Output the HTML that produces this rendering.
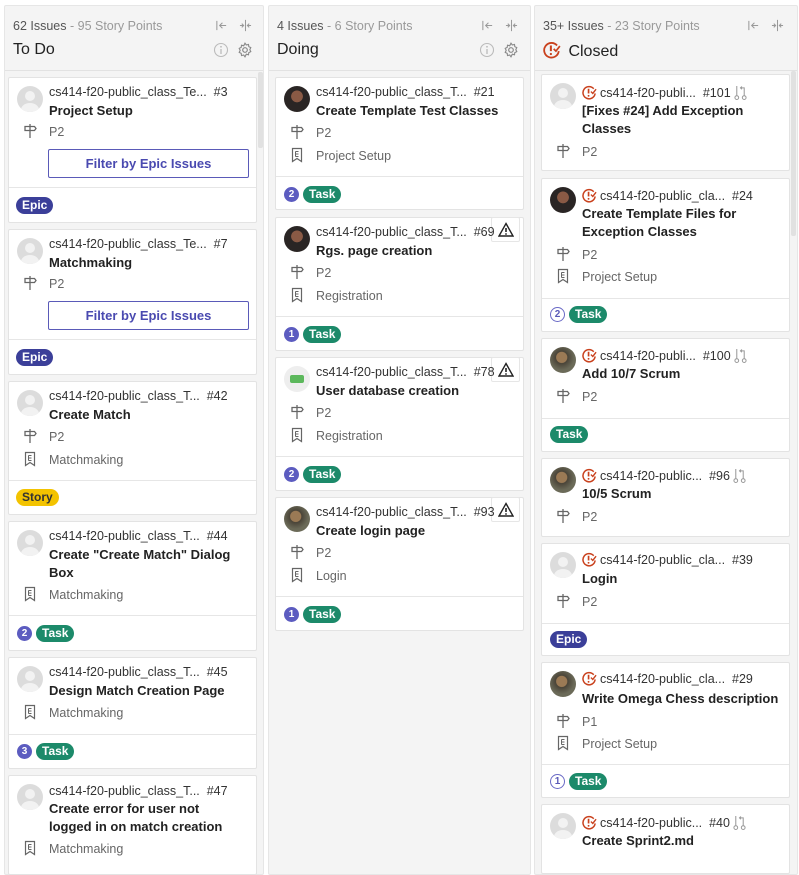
<!DOCTYPE html>
<html><head><meta charset="utf-8">
<style>
*{box-sizing:border-box;margin:0;padding:0}
body{width:799px;height:861px;overflow:hidden;background:#fff;font-family:"Liberation Sans",sans-serif;color:#333;position:relative}
.col{position:absolute;top:5px;height:870px;background:#f4f4f4;border:1px solid #e6e6e6;border-radius:2px}
.hd{position:absolute;left:0;right:0;top:0;height:65px;border-bottom:1px solid #e2e2e2}
.cnt{position:absolute;left:8px;top:13px;font-size:12.5px;color:#555;white-space:nowrap}
.cnt span{color:#999}
.nm{position:absolute;left:8px;top:35px;font-size:16px;color:#222}
.hi{position:absolute}
.sb{position:absolute;width:5px;background:#e1e1e1;border-radius:2px}
.c{position:absolute;background:#fff;border:1px solid #e3e3e3;border-radius:2px}
.c>*{position:absolute}
.av{left:8px;width:26px;height:26px;border-radius:50%;background:#dcdcdc;overflow:hidden}
.av:before{content:"";position:absolute;left:8px;top:5px;width:10px;height:10px;border-radius:50%;background:#f2f2f2}
.av:after{content:"";position:absolute;left:4px;top:17px;width:18px;height:14px;border-radius:50%;background:#f2f2f2}
.av.p{background:radial-gradient(circle at 50% 40%,#8a5a45 0 28%,#2a2524 30%)}
.av.p2{background:radial-gradient(circle at 45% 40%,#9b7a55 0 25%,#4a4438 28%,#6b6a58 60%)}
.av.g{background:#eee}
.av.p:before,.av.p:after,.av.p2:before,.av.p2:after{display:none}
.av.g:before{left:6px;top:9px;width:14px;height:8px;border-radius:2px;background:#5cb85c}
.av.g:after{display:none}
.l1{left:40px;font-size:12.5px;line-height:17px;color:#333;white-space:nowrap}
.t{left:40px;font-size:13px;line-height:18px;color:#222;font-weight:bold;white-space:nowrap}
.m{left:40px;font-size:12.5px;line-height:18px;color:#666;white-space:nowrap}
.mi{left:14px;width:14px;height:16px}
.btn{left:39px;width:201px;height:29px;border:1px solid #5a5ab8;border-radius:2px;color:#4a4ab0;font-size:13px;text-align:center;line-height:27px;font-weight:bold}
.ft{left:0;right:0;height:1px;background:#e6e6e6}
.lb{height:17px;border-radius:9px;color:#fff;font-size:12px;font-weight:bold;line-height:17px;padding:0 6px}
.epic{background:#3b3f99}.task{background:#1c8a6a}.story{background:#f3c300;color:#333}
.w{width:15px;height:15px;border-radius:50%;background:#5c5cc0;color:#fff;font-size:10px;font-weight:bold;text-align:center;line-height:15px}
.w.o{background:#fff;border:1px solid #6a6ac6;color:#5a5ab8;line-height:13px}
.warn{right:3px;top:-1px;width:29px;height:25px;background:#fff;border:1px solid #e6e6e6;border-radius:2px}
.ci{display:inline-block;vertical-align:-3px;margin-right:3px}
</style></head><body>

<svg width="0" height="0" style="position:absolute"><defs>
<symbol id="ms" viewBox="0 0 14 16"><path d="M7 1v14M2 3.5h9.5l1.5 2-1.5 2H2z" fill="none" stroke="#666" stroke-width="1.3"/></symbol>
<symbol id="ep" viewBox="0 0 14 16"><path d="M2.5 1.5h9v13l-4.5-3-4.5 3z" fill="none" stroke="#666" stroke-width="1.2"/><path d="M5.5 4.5h3M5.5 7h3M5.5 9.5h3M5.5 4.5v5" stroke="#666" stroke-width="1"/></symbol>
<symbol id="cl" viewBox="0 0 16 16"><path d="M12.5 4A6.5 6.5 0 1 0 14 9" fill="none" stroke="#c9411d" stroke-width="1.6"/><path d="M7 4v5" stroke="#c9411d" stroke-width="1.8"/><circle cx="7" cy="11.5" r="1" fill="#c9411d"/><path d="M9.5 7l2 2 3.5-4.5" fill="none" stroke="#c9411d" stroke-width="1.5"/></symbol>
<symbol id="pr" viewBox="0 0 14 18"><circle cx="3" cy="14.5" r="2" fill="none" stroke="#999" stroke-width="1.1"/><circle cx="11" cy="14.5" r="2" fill="none" stroke="#999" stroke-width="1.1"/><path d="M3 12.5V2M11 12.5V4H7M8.5 2.5L7 4l1.5 1.5" fill="none" stroke="#999" stroke-width="1.1"/></symbol>
<symbol id="wr" viewBox="0 0 16 16"><path d="M8 1.5L15 14H1z" fill="none" stroke="#222" stroke-width="1.4"/><path d="M8 6v4" stroke="#222" stroke-width="1.6"/><circle cx="8" cy="12" r=".9" fill="#222"/></symbol>
<symbol id="hc" viewBox="0 0 14 14"><path d="M2 2v10M12 7H5M8 4L5 7l3 3" fill="none" stroke="#999" stroke-width="1.1"/></symbol>
<symbol id="hc2" viewBox="0 0 14 14"><path d="M7 1v12M1 7h4M3 5l2 2-2 2M13 7H9M11 5L9 7l2 2" fill="none" stroke="#999" stroke-width="1.1"/></symbol>
<symbol id="inf" viewBox="0 0 16 16"><circle cx="8" cy="8" r="6.5" fill="none" stroke="#bbb" stroke-width="1.1"/><path d="M8 7v5" stroke="#bbb" stroke-width="1.3"/><circle cx="8" cy="4.8" r=".9" fill="#bbb"/></symbol>
<symbol id="gr" viewBox="0 0 16 16"><circle cx="8" cy="8" r="2.3" fill="none" stroke="#888" stroke-width="1.2"/><path d="M8 1.2l1.3 1.8 2.2-.6.3 2.2 2 1-1 2 1 2-2 1-.3 2.2-2.2-.6L8 14.8l-1.3-1.8-2.2.6-.3-2.2-2-1 1-2-1-2 2-1 .3-2.2 2.2.6z" fill="none" stroke="#888" stroke-width="1.1"/></symbol>
</defs></svg>

<!-- Column 1 -->
<div class="col" style="left:4px;width:260px">
 <div class="hd">
  <div class="cnt">62 Issues <span>- 95 Story Points</span></div>
  <div class="nm">To Do</div>
  <svg class="hi" style="left:210px;top:13px" width="13" height="13"><use href="#hc"/></svg>
  <svg class="hi" style="left:234px;top:13px" width="13" height="13"><use href="#hc2"/></svg>
  <svg class="hi" style="left:208px;top:36px" width="16" height="16"><use href="#inf"/></svg>
  <svg class="hi" style="left:232px;top:36px" width="16" height="16"><use href="#gr"/></svg>
 </div>
 <div class="sb" style="left:253px;top:66px;height:76px"></div>
</div>

<div class="c" style="left:8px;top:77px;width:249px;height:146px">
 <div class="av" style="top:8px"></div>
 <div class="l1" style="top:6px">cs414-f20-public_class_Te...&nbsp; #3</div>
 <div class="t" style="top:24px">Project Setup</div>
 <svg class="mi" style="top:45px"><use href="#ms"/></svg><div class="m" style="top:45px">P2</div>
 <div class="btn" style="top:71px">Filter by Epic Issues</div>
 <div class="ft" style="top:109px"></div>
 <div class="lb epic" style="left:7px;top:119px">Epic</div>
</div>
<div class="c" style="left:8px;top:229px;width:249px;height:146px">
 <div class="av" style="top:8px"></div>
 <div class="l1" style="top:6px">cs414-f20-public_class_Te...&nbsp; #7</div>
 <div class="t" style="top:24px">Matchmaking</div>
 <svg class="mi" style="top:45px"><use href="#ms"/></svg><div class="m" style="top:45px">P2</div>
 <div class="btn" style="top:71px">Filter by Epic Issues</div>
 <div class="ft" style="top:109px"></div>
 <div class="lb epic" style="left:7px;top:119px">Epic</div>
</div>
<div class="c" style="left:8px;top:381px;width:249px;height:134px">
 <div class="av" style="top:8px"></div>
 <div class="l1" style="top:6px">cs414-f20-public_class_T...&nbsp; #42</div>
 <div class="t" style="top:24px">Create Match</div>
 <svg class="mi" style="top:46px"><use href="#ms"/></svg><div class="m" style="top:46px">P2</div>
 <svg class="mi" style="top:69px"><use href="#ep"/></svg><div class="m" style="top:69px">Matchmaking</div>
 <div class="ft" style="top:98px"></div>
 <div class="lb story" style="left:7px;top:107px">Story</div>
</div>
<div class="c" style="left:8px;top:521px;width:249px;height:130px">
 <div class="av" style="top:8px"></div>
 <div class="l1" style="top:6px">cs414-f20-public_class_T...&nbsp; #44</div>
 <div class="t" style="top:24px">Create "Create Match" Dialog</div>
 <div class="t" style="top:42px">Box</div>
 <svg class="mi" style="top:64px"><use href="#ep"/></svg><div class="m" style="top:64px">Matchmaking</div>
 <div class="ft" style="top:93px"></div>
 <div class="w" style="left:8px;top:104px">2</div>
 <div class="lb task" style="left:27px;top:103px">Task</div>
</div>
<div class="c" style="left:8px;top:657px;width:249px;height:112px">
 <div class="av" style="top:8px"></div>
 <div class="l1" style="top:6px">cs414-f20-public_class_T...&nbsp; #45</div>
 <div class="t" style="top:24px">Design Match Creation Page</div>
 <svg class="mi" style="top:46px"><use href="#ep"/></svg><div class="m" style="top:46px">Matchmaking</div>
 <div class="ft" style="top:76px"></div>
 <div class="w" style="left:8px;top:86px">3</div>
 <div class="lb task" style="left:27px;top:85px">Task</div>
</div>
<div class="c" style="left:8px;top:775px;width:249px;height:100px">
 <div class="av" style="top:8px"></div>
 <div class="l1" style="top:7px">cs414-f20-public_class_T...&nbsp; #47</div>
 <div class="t" style="top:24px">Create error for user not</div>
 <div class="t" style="top:42px">logged in on match creation</div>
 <svg class="mi" style="top:64px"><use href="#ep"/></svg><div class="m" style="top:64px">Matchmaking</div>
</div>

<!-- Column 2 -->
<div class="col" style="left:268px;width:263px">
 <div class="hd">
  <div class="cnt">4 Issues <span>- 6 Story Points</span></div>
  <div class="nm">Doing</div>
  <svg class="hi" style="left:212px;top:13px" width="13" height="13"><use href="#hc"/></svg>
  <svg class="hi" style="left:236px;top:13px" width="13" height="13"><use href="#hc2"/></svg>
  <svg class="hi" style="left:210px;top:36px" width="16" height="16"><use href="#inf"/></svg>
  <svg class="hi" style="left:234px;top:36px" width="16" height="16"><use href="#gr"/></svg>
 </div>
</div>

<div class="c" style="left:275px;top:77px;width:249px;height:133px">
 <div class="av p" style="top:8px"></div>
 <div class="l1" style="top:6px">cs414-f20-public_class_T...&nbsp; #21</div>
 <div class="t" style="top:24px">Create Template Test Classes</div>
 <svg class="mi" style="top:46px"><use href="#ms"/></svg><div class="m" style="top:46px">P2</div>
 <svg class="mi" style="top:69px"><use href="#ep"/></svg><div class="m" style="top:69px">Project Setup</div>
 <div class="ft" style="top:98px"></div>
 <div class="w" style="left:8px;top:109px">2</div>
 <div class="lb task" style="left:27px;top:108px">Task</div>
</div>
<div class="c" style="left:275px;top:217px;width:249px;height:134px">
 <div class="warn"><svg style="position:absolute;left:6px;top:4px" width="16" height="16"><use href="#wr"/></svg></div>
 <div class="av p" style="top:8px"></div>
 <div class="l1" style="top:6px">cs414-f20-public_class_T...&nbsp; #69</div>
 <div class="t" style="top:24px">Rgs. page creation</div>
 <svg class="mi" style="top:46px"><use href="#ms"/></svg><div class="m" style="top:46px">P2</div>
 <svg class="mi" style="top:69px"><use href="#ep"/></svg><div class="m" style="top:69px">Registration</div>
 <div class="ft" style="top:98px"></div>
 <div class="w" style="left:8px;top:109px">1</div>
 <div class="lb task" style="left:27px;top:108px">Task</div>
</div>
<div class="c" style="left:275px;top:357px;width:249px;height:134px">
 <div class="warn"><svg style="position:absolute;left:6px;top:4px" width="16" height="16"><use href="#wr"/></svg></div>
 <div class="av g" style="top:8px"></div>
 <div class="l1" style="top:6px">cs414-f20-public_class_T...&nbsp; #78</div>
 <div class="t" style="top:24px">User database creation</div>
 <svg class="mi" style="top:46px"><use href="#ms"/></svg><div class="m" style="top:46px">P2</div>
 <svg class="mi" style="top:69px"><use href="#ep"/></svg><div class="m" style="top:69px">Registration</div>
 <div class="ft" style="top:98px"></div>
 <div class="w" style="left:8px;top:109px">2</div>
 <div class="lb task" style="left:27px;top:108px">Task</div>
</div>
<div class="c" style="left:275px;top:497px;width:249px;height:134px">
 <div class="warn"><svg style="position:absolute;left:6px;top:4px" width="16" height="16"><use href="#wr"/></svg></div>
 <div class="av p2" style="top:8px"></div>
 <div class="l1" style="top:6px">cs414-f20-public_class_T...&nbsp; #93</div>
 <div class="t" style="top:24px">Create login page</div>
 <svg class="mi" style="top:46px"><use href="#ms"/></svg><div class="m" style="top:46px">P2</div>
 <svg class="mi" style="top:69px"><use href="#ep"/></svg><div class="m" style="top:69px">Login</div>
 <div class="ft" style="top:98px"></div>
 <div class="w" style="left:8px;top:109px">1</div>
 <div class="lb task" style="left:27px;top:108px">Task</div>
</div>

<!-- Column 3 -->
<div class="col" style="left:534px;width:264px">
 <div class="hd">
  <div class="cnt">35+ Issues <span>- 23 Story Points</span></div>
  <div class="nm"><svg class="ci" width="18" height="18"><use href="#cl"/></svg> Closed</div>
  <svg class="hi" style="left:212px;top:13px" width="13" height="13"><use href="#hc"/></svg>
  <svg class="hi" style="left:236px;top:13px" width="13" height="13"><use href="#hc2"/></svg>
 </div>
 <div class="sb" style="left:256px;top:65px;height:165px"></div>
</div>

<div class="c" style="left:541px;top:74px;width:249px;height:97px">
 <div class="av" style="top:8px"></div>
 <div class="l1" style="top:9px"><svg class="ci" width="15" height="15"><use href="#cl"/></svg>cs414-f20-publi...&nbsp; #101 <svg class="ci" width="13" height="17" style="vertical-align:-4px"><use href="#pr"/></svg></div>
 <div class="t" style="top:27px">[Fixes #24] Add Exception</div>
 <div class="t" style="top:45px">Classes</div>
 <svg class="mi" style="top:68px"><use href="#ms"/></svg><div class="m" style="top:68px">P2</div>
</div>
<div class="c" style="left:541px;top:178px;width:249px;height:154px">
 <div class="av p" style="top:8px"></div>
 <div class="l1" style="top:9px"><svg class="ci" width="15" height="15"><use href="#cl"/></svg>cs414-f20-public_cla...&nbsp; #24</div>
 <div class="t" style="top:26px">Create Template Files for</div>
 <div class="t" style="top:44px">Exception Classes</div>
 <svg class="mi" style="top:67px"><use href="#ms"/></svg><div class="m" style="top:67px">P2</div>
 <svg class="mi" style="top:89px"><use href="#ep"/></svg><div class="m" style="top:89px">Project Setup</div>
 <div class="ft" style="top:119px"></div>
 <div class="w o" style="left:8px;top:128px">2</div>
 <div class="lb task" style="left:27px;top:127px">Task</div>
</div>
<div class="c" style="left:541px;top:338px;width:249px;height:114px">
 <div class="av p2" style="top:8px"></div>
 <div class="l1" style="top:8px"><svg class="ci" width="15" height="15"><use href="#cl"/></svg>cs414-f20-publi...&nbsp; #100 <svg class="ci" width="13" height="17" style="vertical-align:-4px"><use href="#pr"/></svg></div>
 <div class="t" style="top:26px">Add 10/7 Scrum</div>
 <svg class="mi" style="top:49px"><use href="#ms"/></svg><div class="m" style="top:49px">P2</div>
 <div class="ft" style="top:79px"></div>
 <div class="lb task" style="left:8px;top:87px">Task</div>
</div>
<div class="c" style="left:541px;top:458px;width:249px;height:79px">
 <div class="av p2" style="top:8px"></div>
 <div class="l1" style="top:8px"><svg class="ci" width="15" height="15"><use href="#cl"/></svg>cs414-f20-public...&nbsp; #96 <svg class="ci" width="13" height="17" style="vertical-align:-4px"><use href="#pr"/></svg></div>
 <div class="t" style="top:26px">10/5 Scrum</div>
 <svg class="mi" style="top:49px"><use href="#ms"/></svg><div class="m" style="top:49px">P2</div>
</div>
<div class="c" style="left:541px;top:543px;width:249px;height:113px">
 <div class="av" style="top:8px"></div>
 <div class="l1" style="top:8px"><svg class="ci" width="15" height="15"><use href="#cl"/></svg>cs414-f20-public_cla...&nbsp; #39</div>
 <div class="t" style="top:26px">Login</div>
 <svg class="mi" style="top:49px"><use href="#ms"/></svg><div class="m" style="top:49px">P2</div>
 <div class="ft" style="top:79px"></div>
 <div class="lb epic" style="left:8px;top:87px">Epic</div>
</div>
<div class="c" style="left:541px;top:662px;width:249px;height:136px">
 <div class="av p2" style="top:8px"></div>
 <div class="l1" style="top:8px"><svg class="ci" width="15" height="15"><use href="#cl"/></svg>cs414-f20-public_cla...&nbsp; #29</div>
 <div class="t" style="top:27px">Write Omega Chess description</div>
 <svg class="mi" style="top:50px"><use href="#ms"/></svg><div class="m" style="top:50px">P1</div>
 <svg class="mi" style="top:72px"><use href="#ep"/></svg><div class="m" style="top:72px">Project Setup</div>
 <div class="ft" style="top:101px"></div>
 <div class="w o" style="left:8px;top:111px">1</div>
 <div class="lb task" style="left:27px;top:110px">Task</div>
</div>
<div class="c" style="left:541px;top:804px;width:249px;height:70px">
 <div class="av" style="top:8px"></div>
 <div class="l1" style="top:9px"><svg class="ci" width="15" height="15"><use href="#cl"/></svg>cs414-f20-public...&nbsp; #40 <svg class="ci" width="13" height="17" style="vertical-align:-4px"><use href="#pr"/></svg></div>
 <div class="t" style="top:27px">Create Sprint2.md</div>
</div>

</body></html>
